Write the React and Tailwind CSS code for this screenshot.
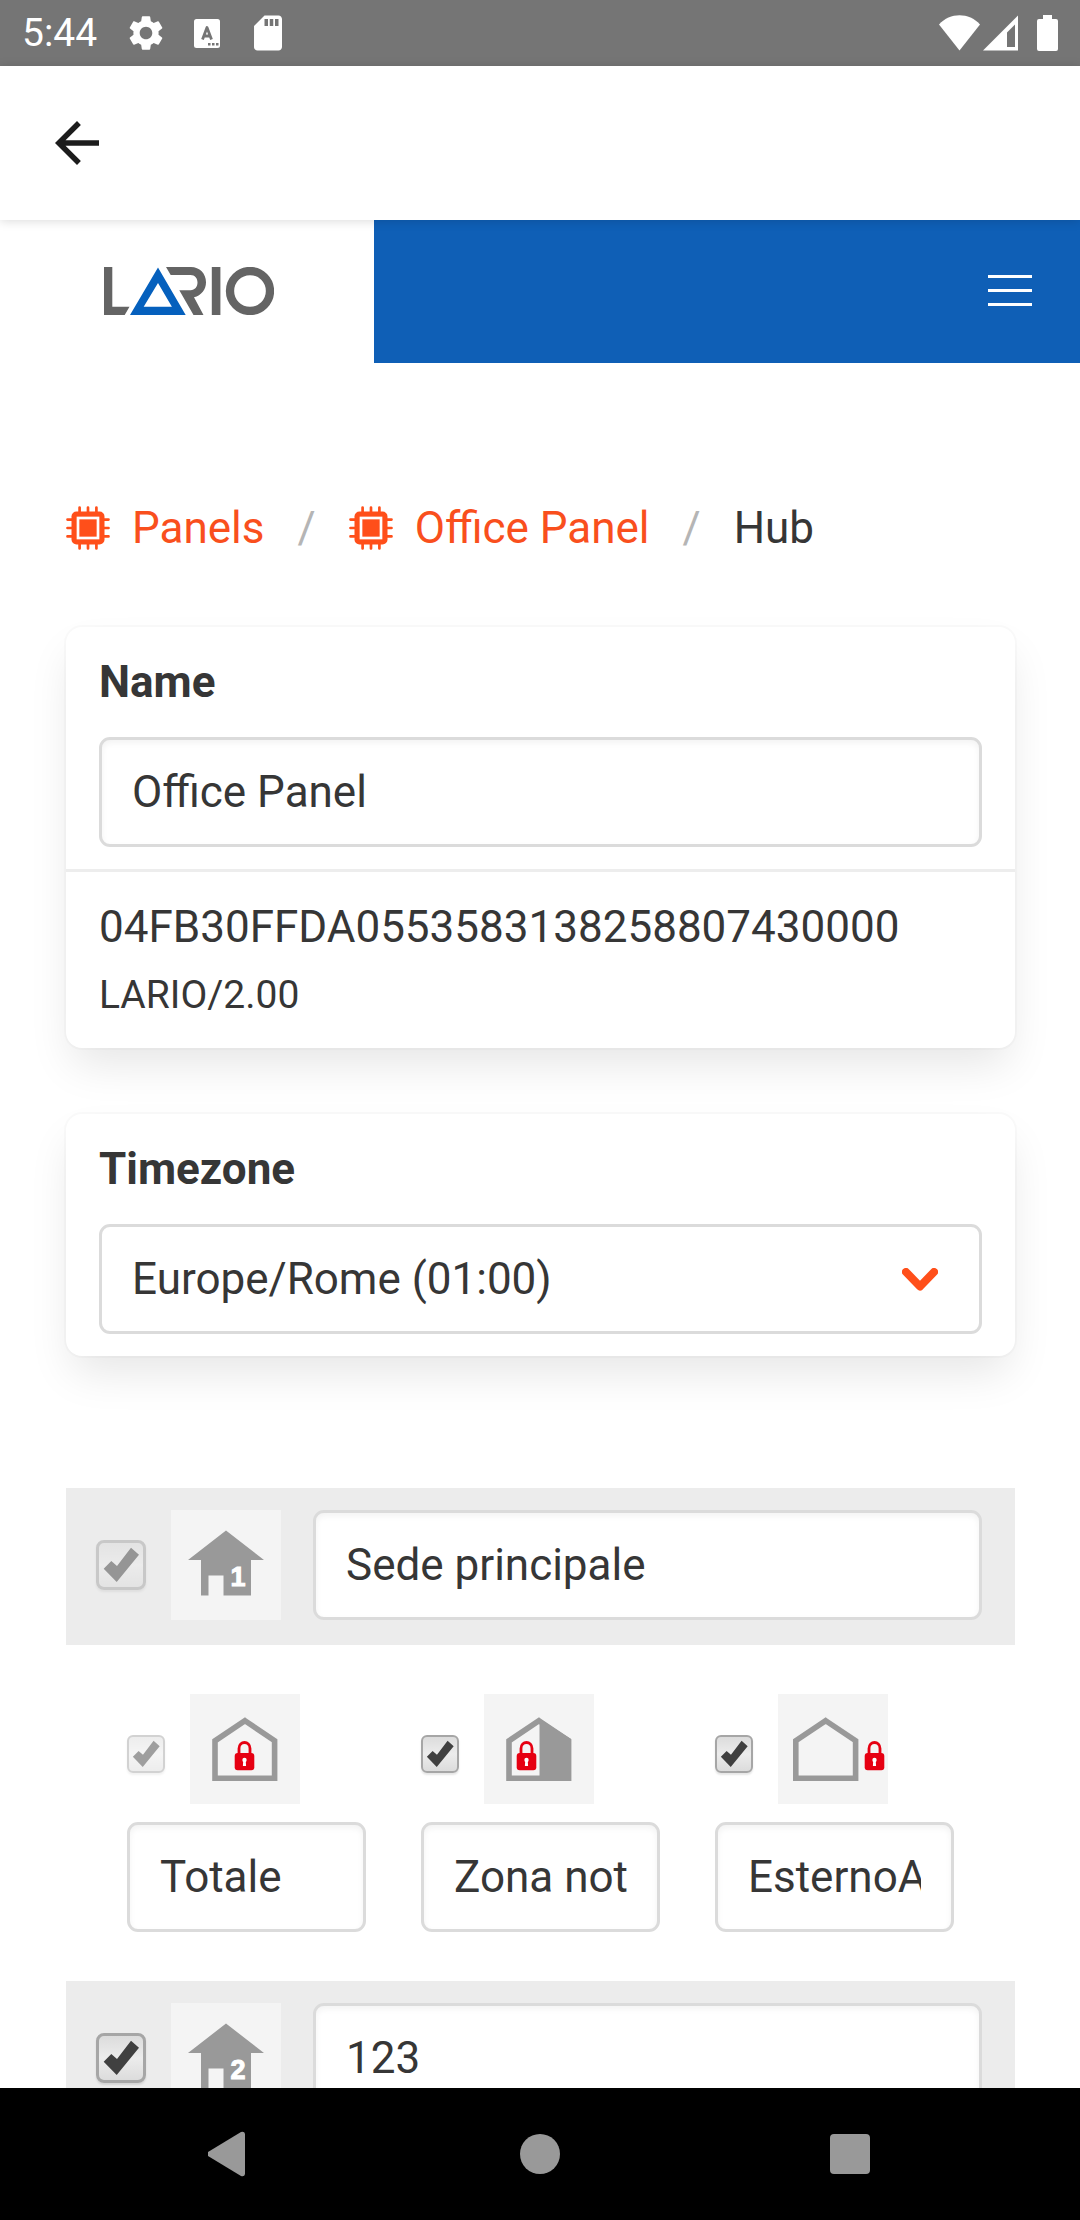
import { useState } from 'react'
import { MdArrowBack, MdSettings, MdSdCard } from 'react-icons/md'
import clsx from 'clsx'

const AREAS = [
  {
    id: 1,
    name: 'Sede principale',
    enabled: true,
    locked: true,
    modes: [
      { id: 'total', name: 'Totale', enabled: true, locked: true },
      { id: 'partial', name: 'Zona not', enabled: true, locked: false },
      { id: 'outside', name: 'EsternoA', enabled: true, locked: false },
    ],
  },
  { id: 2, name: '123', enabled: true, locked: false, modes: [] },
]

/* ── Icons ── */

function Logo() {
  return (
    <svg viewBox="0 0 170 48" className="h-12 w-[170px]" role="img" aria-label="Lario">
      <g fill="#646464">
        <path d="M0 0H8.3V39.7H25.5L20.7 48H0Z" />
        <path d="M62 0H87C95.500 0 102 6.500 102 15.300C102 22.500 97.500 28.500 90 30.300L99.500 48H89.500L75.300 23.200H86.500C91 23.200 93.500 20 93.500 15.600C93.500 11.200 91 8 86.500 8H66.700Z" />
        <path d="M107.800 0H116.400V48H107.800Z" />
      </g>
      <circle cx="146" cy="24" r="20" fill="none" stroke="#646464" strokeWidth="8.300" />
      <path fillRule="evenodd" d="M54 0.500L81.700 48H26ZM54 16L39.700 39.700H67.900Z" fill="#0560bd" />
    </svg>
  )
}

function ChipIcon() {
  return (
    <svg viewBox="0 0 44 44" className="h-11 w-11 shrink-0" aria-hidden="true">
      <path
        d="M13.600 1.500V42.500M22 1.500V42.500M30.400 1.500V42.500M1.500 13.600H42.500M1.500 22H42.500M1.500 30.400H42.500"
        stroke="#ff4f1a"
        strokeWidth="2.700"
        strokeLinecap="round"
      />
      <rect x="5.500" y="5.500" width="33" height="33" rx="5" fill="#ff4f1a" />
      <rect x="12" y="12" width="20" height="20" fill="none" stroke="#fff" strokeWidth="2.700" />
    </svg>
  )
}

function AreaIcon({ number }) {
  return (
    <svg viewBox="0 0 110 110" className="h-[110px] w-[110px] shrink-0 bg-[#f4f4f4]" aria-hidden="true">
      <path d="M55 20.500L93 50H80V85.500H52.500V65.500H37.500V85.500H30V50H17Z" fill="#999" />
      <text
        x="67"
        y="76"
        fill="#fff"
        stroke="#fff"
        strokeWidth="1"
        textAnchor="middle"
        className="font-['Liberation_Sans',sans-serif] text-[27px] font-bold"
      >
        {number}
      </text>
    </svg>
  )
}

function Padlock({ x }) {
  return (
    <g transform={`translate(${x} 0)`}>
      <path d="M-5.500 60V54.500C-5.500 46.500 5.500 46.500 5.500 54.500V60" fill="none" stroke="#e60012" strokeWidth="2.800" />
      <rect x="-9.800" y="59" width="19.600" height="17.300" rx="3" fill="#e60012" />
      <circle cy="66" r="2.200" fill="#fff" />
      <path d="M-1.200 66H1.200L1.600 72H-1.600Z" fill="#fff" />
    </g>
  )
}

function ModeIcon({ mode }) {
  return (
    <svg viewBox="0 0 110 110" className="h-[110px] w-[110px] shrink-0 bg-[#f4f4f4]" aria-hidden="true">
      {mode === 'outside' ? (
        <path d="M47.700 26.700L77.600 46.800V84.200H17.800V46.800Z" fill="none" stroke="#999" strokeWidth="5.600" />
      ) : (
        <path d="M55 26.700L84.600 46.800V84.200H25V46.800Z" fill="none" stroke="#999" strokeWidth="5.600" />
      )}
      {mode === 'partial' && <path d="M55.500 25L87 45V87H55.500Z" fill="#999" />}
      {mode === 'total' && <Padlock x={54.5} />}
      {mode === 'partial' && <Padlock x={42.5} />}
      {mode === 'outside' && <Padlock x={96.5} />}
    </svg>
  )
}

/* ── Form controls ── */

function TextInput({ className, ...props }) {
  return (
    <input
      type="text"
      className={clsx(
        'h-[110px] w-full min-w-0 rounded-[11px] border-[3px] border-[#dbdbdb] bg-white px-[30px] text-[44px] text-[#363636]',
        'shadow-[inset_0_3px_6px_rgba(10,10,10,0.05)] focus:outline-none focus:border-[#0f5fb6]',
        className
      )}
      {...props}
    />
  )
}

function Checkbox({ small, checked, disabled, label, className }) {
  const [on, setOn] = useState(checked)
  return (
    <span
      className={clsx(
        'relative shrink-0',
        small ? 'h-[38px] w-[38px]' : 'h-[50px] w-[50px]',
        disabled && 'opacity-50',
        className
      )}
    >
      <input
        type="checkbox"
        checked={on}
        disabled={disabled}
        onChange={(e) => setOn(e.target.checked)}
        aria-label={label}
        className={clsx(
          'block h-full w-full appearance-none border-[#a6a6a6] bg-linear-to-b from-[#dcdcdc] via-[#ececec] to-[#dcdcdc] shadow-[0_2px_2px_rgba(0,0,0,0.1)]',
          small ? 'rounded-md border-2' : 'rounded-lg border-[3px]'
        )}
      />
      {on && (
        <svg viewBox="0 0 50 50" className="pointer-events-none absolute inset-0 h-full w-full" aria-hidden="true">
          <path d="M7.700 28.700L15.300 21L21 26L35 7.700L43 14.700L20.700 42Z" fill="#404040" />
        </svg>
      )}
    </span>
  )
}

function Card({ children }) {
  return (
    <section className="mb-[66px] rounded-2xl bg-white shadow-[0_22px_44px_-6px_rgba(10,10,10,0.1),0_0_0_2px_rgba(10,10,10,0.02)]">
      {children}
    </section>
  )
}

/* ── Page parts ── */

function StatusBar() {
  return (
    <div className="flex h-[66px] shrink-0 items-center bg-[#757575] px-[22px] text-white">
      <span className="text-[39px]">5:44</span>
      <div className="ml-7 flex items-center gap-[19px]">
        <MdSettings className="h-[42px] w-[42px]" />
        <svg viewBox="0 0 42 42" className="h-[42px] w-[42px]" aria-hidden="true">
          <rect x="8" y="7" width="26" height="29" rx="2.500" fill="#fff" />
          <path d="M16.500 27.500L21 15.500L25.500 27.500M18 24H24" fill="none" stroke="#757575" strokeWidth="2.800" strokeLinejoin="round" />
          <path d="M22 31H24.500V33.500H22ZM26 31H28.500V33.500H26ZM30 31H32.500V33.500H30Z" fill="#757575" />
        </svg>
        <MdSdCard className="h-[42px] w-[42px]" />
      </div>
      <div className="ml-auto flex items-center gap-[3px]">
        <svg viewBox="0 0 41 36" className="h-9 w-[41px]" aria-hidden="true">
          <path d="M20.500 35.500L0 9.500C11 -2.800 30 -2.800 41 9.500Z" fill="#fff" />
        </svg>
        <svg viewBox="0 0 35 36" className="h-9 w-[35px]" aria-hidden="true">
          <path fillRule="evenodd" d="M35 0.500V35.500H0ZM32 9.500L24 17.500V32H32Z" fill="#fff" />
        </svg>
        <svg viewBox="0 0 21 36" className="ml-4 h-9 w-[21px]" aria-hidden="true">
          <path d="M6 0H15V4H19Q21 4 21 6V34Q21 36 19 36H2Q0 36 0 34V6Q0 4 2 4H6Z" fill="#fff" />
        </svg>
      </div>
    </div>
  )
}

function SiteHeader() {
  return (
    <header className="flex h-[143px]">
      <a href="#home" className="flex w-[374px] shrink-0 items-center pb-0.5 pl-[104px]">
        <Logo />
      </a>
      <div className="flex flex-1 items-center justify-end bg-[#0f5fb6] px-12 pb-0.5">
        <button type="button" aria-label="Menu" className="flex w-11 flex-col gap-[11px]">
          <span className="h-[3px] bg-white" />
          <span className="h-[3px] bg-white" />
          <span className="h-[3px] bg-white" />
        </button>
      </div>
    </header>
  )
}

function Breadcrumb() {
  return (
    <nav aria-label="Breadcrumb" className="mb-[66px]">
      <ol className="flex items-center gap-[33px] leading-[66px]">
        <li>
          <a href="#panels" className="flex items-center gap-[22px] text-[#f94f1d]">
            <ChipIcon />
            Panels
          </a>
        </li>
        <li aria-hidden="true" className="text-[#b5b5b5]">/</li>
        <li>
          <a href="#office-panel" className="flex items-center gap-[22px] text-[#f94f1d]">
            <ChipIcon />
            Office Panel
          </a>
        </li>
        <li aria-hidden="true" className="text-[#b5b5b5]">/</li>
        <li aria-current="page">Hub</li>
      </ol>
    </nav>
  )
}

function Area({ area }) {
  return (
    <section>
      <div className="flex items-center bg-[#ececec] pt-[22px] pr-[33px] pb-[25px] pl-[30px]">
        <Checkbox checked={area.enabled} disabled={area.locked} label={`Area ${area.id}`} />
        <div className="mr-8 ml-[25px] shrink-0">
          <AreaIcon number={area.id} />
        </div>
        <TextInput defaultValue={area.name} aria-label={`Area ${area.id} name`} />
      </div>

      {area.modes.length > 0 && (
        <div className="grid grid-cols-3 gap-[55px] px-[61px] py-[49px]">
          {area.modes.map((mode) => (
            <div key={mode.id} className="flex min-w-0 flex-col gap-[18px]">
              <div className="flex items-center gap-[25px]">
                <Checkbox small checked={mode.enabled} disabled={mode.locked} label={mode.name} className="mt-2.5" />
                <ModeIcon mode={mode.id} />
              </div>
              <TextInput defaultValue={mode.name} aria-label={`${mode.name} name`} />
            </div>
          ))}
        </div>
      )}
    </section>
  )
}

function SystemNav() {
  return (
    <div className="flex h-[132px] shrink-0 items-center justify-center gap-[266px] bg-black">
      <button type="button" aria-label="Back">
        <svg viewBox="0 0 44 46" className="h-[46px] w-11">
          <path d="M0 21Q-2 23 0 25L33 45Q36.500 46 37 43V3Q36.500 0 33 1Z" fill="#999" />
        </svg>
      </button>
      <button type="button" aria-label="Home" className="flex w-11 justify-center">
        <span className="h-10 w-10 rounded-full bg-[#999]" />
      </button>
      <button type="button" aria-label="Recent apps" className="flex w-11 justify-center">
        <span className="h-10 w-10 rounded bg-[#999]" />
      </button>
    </div>
  )
}

export default function App() {
  return (
    <div className="flex h-screen flex-col bg-white font-[Roboto,sans-serif] text-[44px] text-[#363636]">
      <StatusBar />

      <div className="relative z-10 flex h-[154px] shrink-0 items-center bg-white px-11 shadow-[0_1px_10px_rgba(0,0,0,0.15)]">
        <button type="button" aria-label="Go back" className="text-[#1c1c1c]">
          <MdArrowBack className="h-[66px] w-[66px]" />
        </button>
      </div>

      <div className="min-h-0 flex-1 overflow-y-auto [scrollbar-width:none]">
        <SiteHeader />

        <main className="pt-[132px] pr-[65px] pl-[66px]">
          <Breadcrumb />

          <Card>
            <div className="border-b-[3px] border-[#ededed] px-[33px] py-[22px]">
              <label htmlFor="panel-name" className="mb-[22px] block leading-[66px] font-bold">
                Name
              </label>
              <TextInput id="panel-name" defaultValue="Office Panel" />
            </div>
            <div className="px-[33px] py-[22px] leading-[66px]">
              <p>04FB30FFDA0553583138258807430000</p>
              <p>
                <span className="text-[39px] leading-none">LARIO/2.00</span>
              </p>
            </div>
          </Card>

          <Card>
            <div className="px-[33px] py-[22px]">
              <label htmlFor="timezone" className="mb-[22px] block leading-[66px] font-bold">
                Timezone
              </label>
              <div className="relative">
                <select
                  id="timezone"
                  className="block h-[110px] w-full appearance-none rounded-[11px] border-[3px] border-[#dbdbdb] bg-white px-[30px] text-[#363636]"
                >
                  <option>Europe/Rome (01:00)</option>
                </select>
                <svg
                  viewBox="0 0 36 23"
                  className="pointer-events-none absolute top-11 right-11 h-[23px] w-9"
                  aria-hidden="true"
                >
                  <path
                    d="M4 4L18 18.500L32 4"
                    fill="none"
                    stroke="#ff4f1a"
                    strokeWidth="8"
                    strokeLinecap="round"
                    strokeLinejoin="round"
                  />
                </svg>
              </div>
            </div>
          </Card>

          <div className="pt-[66px]">
            {AREAS.map((area) => (
              <Area key={area.id} area={area} />
            ))}
          </div>
        </main>
      </div>

      <SystemNav />
    </div>
  )
}
